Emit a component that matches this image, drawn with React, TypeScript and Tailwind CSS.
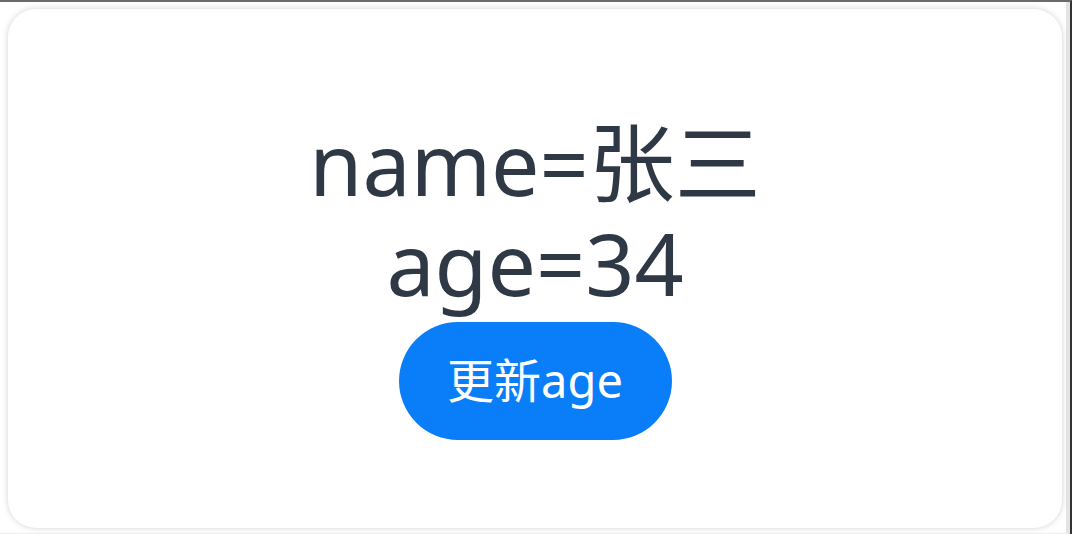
import React, { useState } from 'react';

export default function App() {
  const [age, setAge] = useState(34);

  return (
    <div className="w-[1072px] h-[534px] bg-white border-t-2 border-t-[#6a6a6a] border-r-2 border-r-[#333] flex">
      <div className="flex-1 pt-[7px] pl-[8px] pr-[4px] pb-[5px] border-r-4 border-r-[#e4e4e4] border-b border-b-[#ececec]">
        <div className="h-full rounded-[28px] bg-white shadow-[0_0_6px_rgba(0,0,0,0.18)] flex flex-col items-center justify-center pt-[15px] font-['Noto_Sans','Noto_Sans_CJK_SC',sans-serif]">
          <div className="text-[86px] leading-[100px] text-[#2f3845] text-center pb-[9px]">
            <div>name=张三</div>
            <div>age={age}</div>
          </div>
          <button
            className="w-[273px] h-[118px] rounded-full bg-[#0a7ef8] text-white text-[47px] leading-none"
            onClick={() => setAge(age + 1)}
          >
            更新age
          </button>
        </div>
      </div>
    </div>
  );
}
